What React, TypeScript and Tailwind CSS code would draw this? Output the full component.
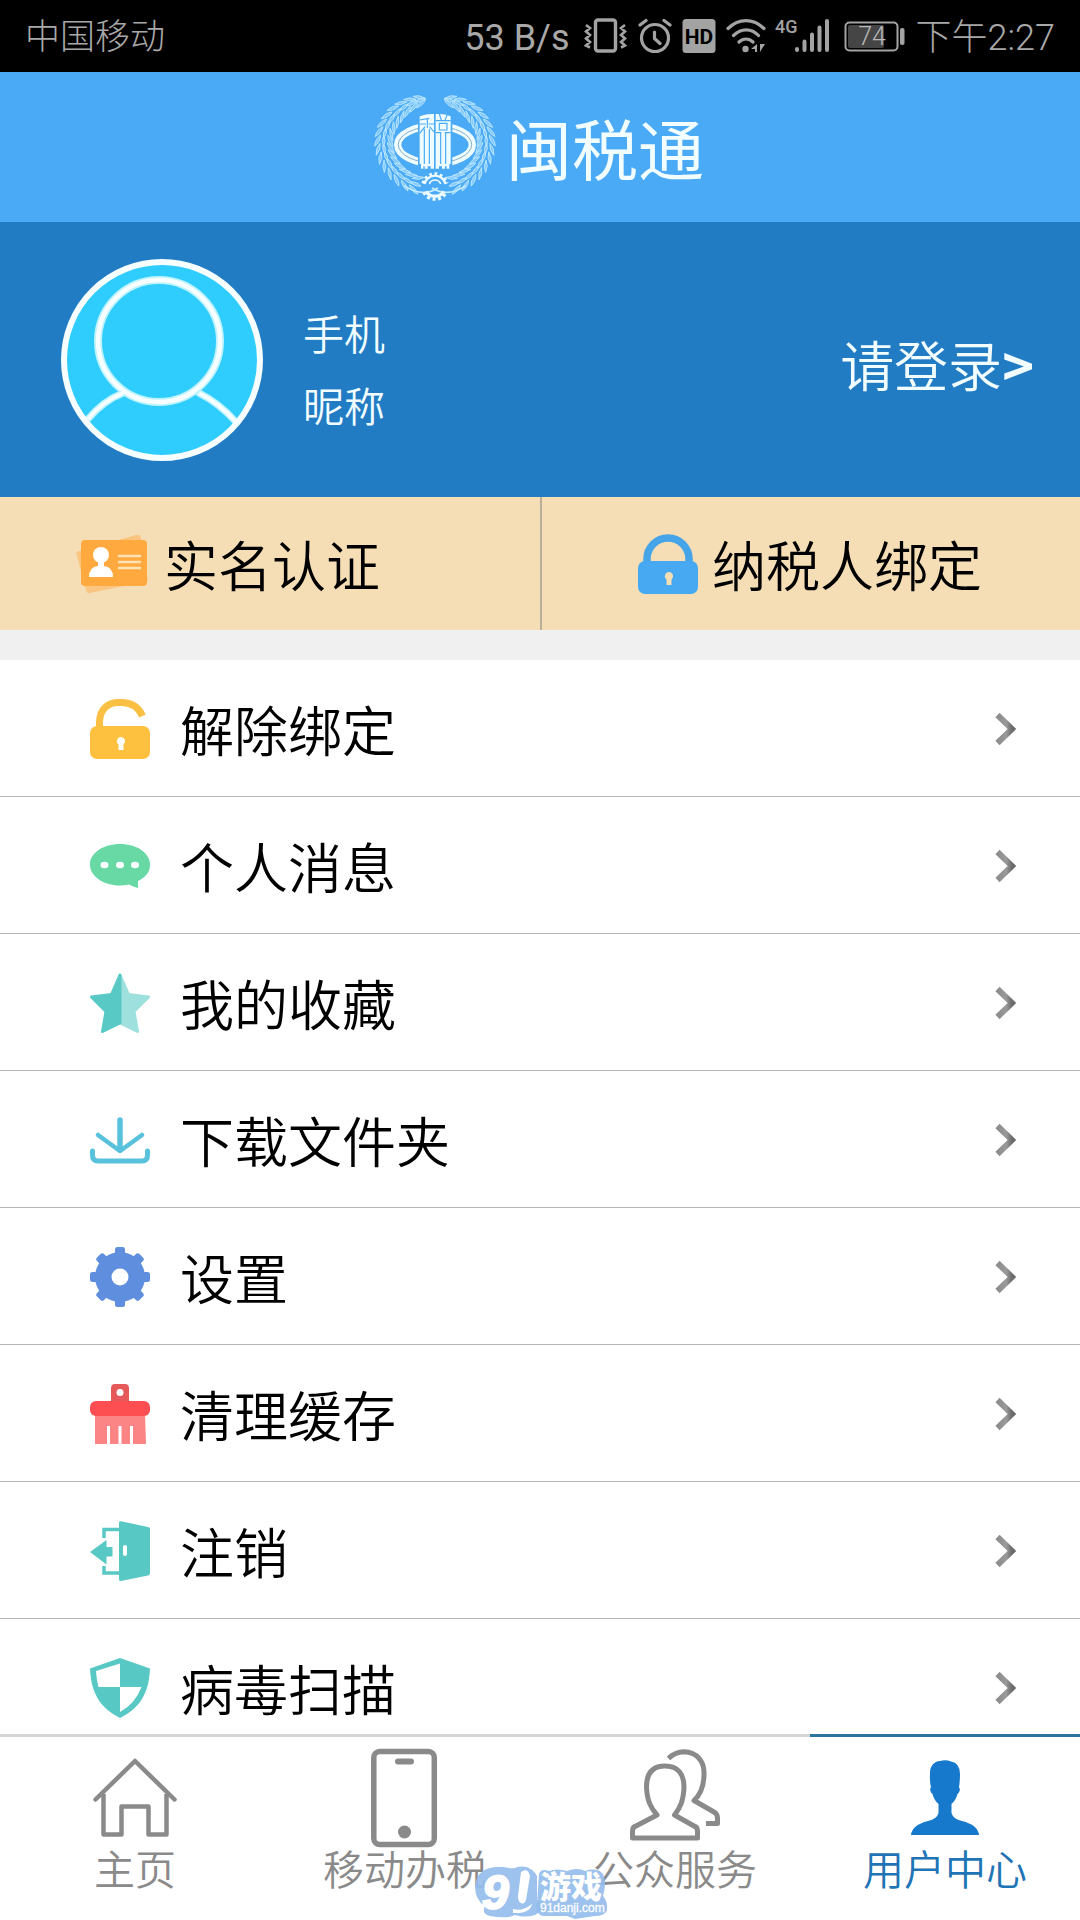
import React from 'react';

/* ---------- status bar drawings ---------- */

const VibrateIcon = () => (
  <svg width="44" height="36" viewBox="0 0 44 36" fill="none" stroke="#a3a3a3" aria-hidden="true">
    <rect x="11.5" y="2" width="20" height="31" rx="2.5" strokeWidth="3.4" />
    <path d="M2 7l4 3-4 3.500 4 3.500-4 3.500 4 3.500-4 3.500 4 2M41 7l-4 3 4 3.500-4 3.500 4 3.500-4 3.500 4 3.500-4 2" strokeWidth="2.6" />
  </svg>
);

const AlarmIcon = () => (
  <svg width="34" height="36" viewBox="0 0 34 36" fill="none" stroke="#a3a3a3" strokeWidth="3.2" strokeLinecap="round" aria-hidden="true">
    <circle cx="17" cy="20" r="13.500" />
    <path d="M2 7l6-4.500M32 7l-6-4.500M16.500 14v6.500l5.500 5" />
  </svg>
);

const HdIcon = () => (
  <svg width="34" height="36" viewBox="0 0 34 36" aria-label="HD">
    <rect x="0.500" y="1" width="33" height="34" rx="3.500" fill="#a3a3a3" />
    <text x="17" y="25.500" textAnchor="middle" fontFamily="Roboto, sans-serif" fontWeight="700" fontSize="21" fill="#000">HD</text>
  </svg>
);

const WifiIcon = () => (
  <svg width="40" height="36" viewBox="0 0 40 36" fill="none" stroke="#a3a3a3" strokeWidth="3.2" strokeLinecap="round" aria-hidden="true">
    <path d="M2 10.500C13 0 27 0 38 10.500M7.500 17.500C15 10 25.500 10 32.500 17.500M13 24C17 20 23 20 27 24" />
    <circle cx="19.500" cy="31" r="3.200" fill="#a3a3a3" stroke="none" />
    <path d="M31 26v8h-2v-3h-4zM34 34v-8h5l-3.500 5.500z" fill="#a3a3a3" stroke="none" />
  </svg>
);

const SignalIcon = () => (
  <svg width="54" height="36" viewBox="0 0 54 36" aria-label="4G" className="overflow-visible">
    <text x="-1" y="15" fontFamily="Roboto, sans-serif" fontWeight="500" fontSize="18" fill="#a3a3a3">4G</text>
    <g stroke="#a3a3a3" strokeWidth="4" strokeLinecap="round">
      <path d="M21 31v1M28.500 23.500v8.500M36 16.500v15.500M43.500 9.500v22.500M51 3v29" />
    </g>
  </svg>
);

const BatteryIcon = () => (
  <svg width="62" height="36" viewBox="0 0 62 36" aria-label="74%">
    <rect x="1.500" y="4.500" width="52" height="28" rx="4" fill="none" stroke="#a3a3a3" strokeWidth="2" />
    <rect x="4" y="7" width="36" height="23" rx="2" fill="#454545" />
    <rect x="56" y="10" width="4.500" height="17" rx="2" fill="#a3a3a3" />
    <text x="28" y="27" textAnchor="middle" fontFamily="Roboto, sans-serif" fontSize="25" fill="#b8b8b8">74</text>
  </svg>
);

/* ---------- emblem ---------- */

type Leaf = { x: number; y: number; a: number; l: number };

const leaves: Leaf[] = [];
for (let i = 0; i < 15; i++) {
  const t = i / 14;
  const deg = 112 + t * 141;
  const rad = (deg * Math.PI) / 180;
  const taper = t > 0.8 ? 1 - (t - 0.8) * 2.4 : 1;
  [-18, 2, 20].forEach((off, k) => {
    const rx = 152 + off * taper;
    const ry = 132 + off * taper;
    const x = 213 + rx * Math.cos(rad);
    const y = 176 + ry * Math.sin(rad);
    leaves.push({ x, y, a: deg + 90 + (k - 1) * 26, l: k === 1 ? 17 : 19 });
  });
}

const WreathHalf = () => (
  <g fill="#84c9fb" stroke="#c6ecfe" strokeWidth="2.2">
    {leaves.map((leaf, i) => (
      <path
        key={i}
        d={`M${-leaf.l} 0Q0 -9 ${leaf.l} 0Q0 9 ${-leaf.l} 0Z`}
        transform={`translate(${leaf.x.toFixed(1)} ${leaf.y.toFixed(1)}) rotate(${leaf.a.toFixed(1)})`}
      />
    ))}
    <path d="M120 305C150 325 185 335 222 312" fill="none" strokeWidth="5" />
  </g>
);

const Emblem = () => (
  <svg width="140" height="120" viewBox="0 0 420 360" aria-hidden="true">
    <WreathHalf />
    <g transform="matrix(-1 0 0 1 426 0)">
      <WreathHalf />
    </g>
    <ellipse cx="213" cy="182" rx="112" ry="56" fill="none" stroke="#effcff" strokeWidth="22" />
    <ellipse cx="213" cy="182" rx="110" ry="55" fill="none" stroke="#86aebd" strokeWidth="3" />
    <path d="M162 94Q190 82 213 86 240 82 265 94V258H162z" fill="#4aaaf6" />
    <path d="M167 97Q190 88 210 90V240H167zM215 90Q240 88 260 97V240H215z" fill="#effcff" />
    <g fill="none" stroke="#4aaaf6">
      <path d="M167 108L196 103M190 106V132M167 120H186M194 120H210M181 134V240M196 134V240M183 128L167 148M197 128L210 144" strokeWidth="3.500" />
      <path d="M226 90L232 108M250 92L243 108M215 110H260M226 118H249V138H226zM215 146H232M242 146H260M230 146V240M245 146V240" strokeWidth="3.500" />
    </g>
    <path d="M171 240H210V254H200V247H191V254H182V247H178V254H171zM215 240H256V254H248V247H243V254H234V247H225V254H215z" fill="#effcff" />
    <g fill="none" stroke="#effcff">
      <path d="M181 300A33 33 0 0 1 245 300" strokeWidth="7" />
      <path d="M177 298A37 37 0 0 1 249 298" strokeWidth="9" strokeDasharray="8 8" />
      <path d="M196 300A18 18 0 0 1 230 300" strokeWidth="5" />
      <path d="M186 322A32 32 0 0 0 240 322" strokeWidth="10" />
      <path d="M179 325A38 38 0 0 0 247 325" strokeWidth="9" strokeDasharray="9 8" />
    </g>
  </svg>
);

/* ---------- profile ---------- */

const Avatar = () => (
  <svg width="202" height="202" viewBox="0 0 202 202" className="shrink-0" aria-hidden="true">
    <circle cx="101" cy="101" r="98" fill="#2fcdfe" />
    <g fill="none" stroke="#bdf3ff" strokeLinecap="round">
      <circle cx="98" cy="82" r="61" strokeWidth="8" />
      <path d="M62 134Q42 142 27 160M138 134Q158 144 175 163" strokeWidth="7" />
    </g>
    <g fill="none" stroke="#f6feff">
      <circle cx="98" cy="82" r="61" strokeWidth="4.500" />
      <path d="M62 134Q42 142 27 160M138 134Q158 144 175 163" strokeWidth="4" />
      <circle cx="101" cy="101" r="98" strokeWidth="6" />
    </g>
  </svg>
);

const IdCardIcon = () => (
  <svg width="74" height="62" viewBox="0 0 74 62" className="shrink-0" aria-hidden="true">
    <path d="M0 19L60 2q4-1 5 3l7 43L14 60q-3 1-4-3z" fill="#f9c580" />
    <rect x="5" y="7" width="66" height="46" rx="4" fill="#ffa93e" />
    <circle cx="25" cy="22" r="8" fill="#fff" />
    <path d="M22 27h6v6q9 1 9 11H13q0-10 9-11z" fill="#fff" />
    <path d="M43 23h21M43 29h21M43 35h21" stroke="#fde3b5" strokeWidth="2.500" strokeLinecap="round" />
  </svg>
);

const Keyhole = ({ fill }: { fill: string }) => (
  <path d="M31 38a4.200 4.200 0 0 1 2.500 7.500V51h-5v-5.500A4.200 4.200 0 0 1 31 38z" fill={fill} />
);

const LockIcon = () => (
  <svg width="60" height="60" viewBox="0 0 60 60" className="shrink-0" aria-hidden="true">
    <path d="M9 31V25a21 21 0 0 1 42 0V31" fill="none" stroke="#46a5e8" strokeWidth="7.500" />
    <rect x="0" y="27" width="60" height="33" rx="7" fill="#46a9f2" />
    <Keyhole fill="#f5deb3" />
  </svg>
);

/* ---------- menu icons, all on a 60 x 60 grid ---------- */

const UnlockIcon = () => (
  <>
    <path d="M9.500 30V23C10 9 19 3 30 3.500 43 3 49 9 52.500 17" fill="none" stroke="#fac043" strokeWidth="7" />
    <rect x="0" y="27" width="60" height="33" rx="7" fill="#fdc03f" />
    <Keyhole fill="#fff" />
  </>
);

const ChatIcon = () => (
  <>
    <path d="M30 8C47 8 60 17 60 28.500 60 36 56 41 48 45V52Q44 51 39 48.500 35 49.500 30 49.500C13 49.500 0 40 0 28.500S13 8 30 8z" fill="#68d9a4" />
    <g fill="#fff">
      <ellipse cx="14.500" cy="29" rx="4" ry="3.300" />
      <ellipse cx="30" cy="29" rx="4" ry="3.300" />
      <ellipse cx="45" cy="29" rx="4" ry="3.300" />
    </g>
  </>
);

const StarIcon = () => (
  <>
    <path d="M30 2L38.500 21.500 58.500 24 44 38.500 47.500 58.500 30 50z" fill="#9ee0dd" stroke="#9ee0dd" strokeWidth="3" strokeLinejoin="round" />
    <path d="M30 2L21.500 21.500 1.500 24 16 38.500 12.500 58.500 30 50z" fill="#58c9c5" stroke="#58c9c5" strokeWidth="3" strokeLinejoin="round" />
  </>
);

const DownloadIcon = () => (
  <g fill="none" stroke="#58c1db" strokeLinecap="round" strokeLinejoin="round">
    <path d="M30 10V40" strokeWidth="5.500" />
    <path d="M8 25L30 41 52 25" strokeWidth="4.500" />
    <path d="M2.500 41V45Q2.500 51 8 51H52Q57.500 51 57.500 45V41" strokeWidth="5" />
  </g>
);

const GearIcon = () => (
  <>
    <g fill="#5e8edd">
      <circle cx="30" cy="30" r="25" />
      {[0, 45, 90, 135].map((a) => (
        <rect key={a} x="25" y="0" width="10" height="60" rx="2.500" transform={`rotate(${a} 30 30)`} />
      ))}
    </g>
    <circle cx="30" cy="30" r="8.500" fill="#fff" />
  </>
);

const BrushIcon = () => (
  <>
    <rect x="21" y="0" width="18" height="24" rx="4" fill="#e6595b" />
    <circle cx="30" cy="8.500" r="3.500" fill="#fff" />
    <path d="M5 28H55L56 60H43V42H40V60H31.500V42H28.500V60H20V42H17V60H5z" fill="#fb8585" />
    <rect x="0" y="17" width="60" height="15" rx="6" fill="#fd4f52" />
  </>
);

const LogoutIcon = () => (
  <>
    <path d="M30 8.500H14V17M14 45V52H30" fill="none" stroke="#58c8c4" strokeWidth="3.500" />
    <path d="M29 1.500Q29 0 31 .300L58 6Q60 6.500 60 8V52Q60 54 58 54.500L31 60Q29 60 29 58.500z" fill="#58c8c4" />
    <rect x="33" y="24" width="4" height="11" rx="2" fill="#fff" />
    <path d="M0 31L16.500 19V26H22.500V35.500H16.500V43.500z" fill="#58c8c4" />
  </>
);

const ShieldIcon = () => (
  <>
    <path d="M30 0L60 10.500C59 35 50 50 30 60 10 50 1 35 0 10.500z" fill="#58c8c4" />
    <path d="M30 5.500V29H8.500Q6.500 22 6 13zM30 29H51.500Q45 46 30 54z" fill="#fff" />
  </>
);

const menu: { label: string; Icon: () => React.ReactElement }[] = [
  { label: '解除绑定', Icon: UnlockIcon },
  { label: '个人消息', Icon: ChatIcon },
  { label: '我的收藏', Icon: StarIcon },
  { label: '下载文件夹', Icon: DownloadIcon },
  { label: '设置', Icon: GearIcon },
  { label: '清理缓存', Icon: BrushIcon },
  { label: '注销', Icon: LogoutIcon },
  { label: '病毒扫描', Icon: ShieldIcon },
];

const Chevron = () => (
  <svg width="22" height="34" viewBox="0 0 22 34" fill="none" className="shrink-0" aria-hidden="true">
    <defs>
      <linearGradient id="chevron" x1="0" y1="0" x2="1" y2="0">
        <stop offset="0" stopColor="#8c8c8c" />
        <stop offset="0.600" stopColor="#9a9a9a" />
        <stop offset="1" stopColor="#6a6a6a" />
      </linearGradient>
    </defs>
    <path d="M3.500 3L18 17 3.500 31" stroke="url(#chevron)" strokeWidth="6" />
  </svg>
);

/* ---------- tab bar ---------- */

const HomeIcon = () => (
  <svg width="84" height="80" viewBox="0 0 84 80" fill="none" stroke="#8a8a8a" strokeWidth="4.500" strokeLinecap="round" strokeLinejoin="round" aria-hidden="true">
    <path d="M2.500 41.500L42 3 81.500 41.500" />
    <path d="M10.500 36V76.500H28.500V48.500H55.500V76.500H73.500V36" strokeLinecap="butt" />
  </svg>
);

const PhoneIcon = () => (
  <svg width="68" height="100" viewBox="0 0 68 100" fill="none" stroke="#8a8a8a" aria-hidden="true">
    <rect x="2.800" y="3.500" width="60.500" height="93" rx="6" strokeWidth="5.500" />
    <path d="M27 13.500H40" strokeWidth="6" strokeLinecap="round" />
    <circle cx="33.500" cy="84" r="6.500" fill="#8a8a8a" stroke="none" />
  </svg>
);

const PeopleIcon = () => (
  <svg width="90" height="98" viewBox="0 0 90 98" fill="none" stroke="#8a8a8a" strokeWidth="5" strokeLinejoin="round" aria-hidden="true">
    <path d="M35 17C22 17 16.500 25 16.500 38 17 52 21 59 27 66L6 77Q2.500 78 2.500 82V89H67.500V82Q67.500 78 64 77L44.500 66C50 59 53.500 52 54 38 54 25 48 17 35 17z" />
    <path d="M38.500 9.500Q45 3 54 2.800C67 3 74.500 13 74 25 74 38 70 46 64 51.500L84 63Q87.500 65 87.500 69V74.500H76" />
  </svg>
);

const UserIcon = () => (
  <svg width="70" height="76" viewBox="0 0 70 76" fill="#1679cb" aria-hidden="true">
    <path d="M30 1Q36 -0.500 41 1.500 50 3 50 14 50 21 49 27.500C51 29 49 33 47.500 34Q46 40 41.500 44V53Q43 59 52 61 68 65 69 75H1Q2 65 18 61 27 59 28.500 53V44Q24 40 22.500 34C21 33 19 29 21 27.500Q19.500 22 20 13C20 6 24 1.500 30 1z" />
  </svg>
);

const tabs = [
  { label: '主页', Icon: HomeIcon, active: false },
  { label: '移动办税', Icon: PhoneIcon, active: false },
  { label: '公众服务', Icon: PeopleIcon, active: false },
  { label: '用户中心', Icon: UserIcon, active: true },
];

const Watermark = () => (
  <svg width="134" height="54" viewBox="0 0 134 54" className="pointer-events-none absolute bottom-0 left-[44%] overflow-visible" aria-hidden="true">
    <g fill="#94bdeb" fillOpacity="0.920">
      <path d="M0 20C1 6 12 0 26 1 34 1 38 4 42 1 50-1 58 2 62 10V34Q70 44 60 49 50 52 40 49 32 53 15 50 6 48 10 40 0 34 0 20z" />
      <path d="M64 8Q66 2 74 5 82 2 92 5 102 1 110 5 122 1 128 8 132 16 128 30 133 36 132 44 130 50 120 50L100 53 92 50H68Q60 48 62 38z" />
    </g>
    <text x="7" y="43" fontFamily="'Liberation Sans', sans-serif" fontWeight="700" fontStyle="italic" fontSize="48" fill="#fff" stroke="#fff" strokeWidth="2">9</text>
    <path d="M46 6Q53 1 55 10L51 34Q49 39 46 37 43 36 43 30z" fill="#fff" />
    <path d="M38 43Q47 46 57 38 55 48 38 47z" fill="#fff" />
    <text x="65" y="32" fontFamily="'Noto Sans CJK SC', sans-serif" fontWeight="900" fontSize="31" fill="#fff">游戏</text>
    <text x="65" y="46" fontFamily="'Liberation Sans', sans-serif" fontSize="12" fill="#fff" stroke="#fff" strokeWidth="0.300">91danji.com</text>
  </svg>
);

export default function App() {
  return (
    <div className="flex h-screen flex-col overflow-hidden bg-white font-['Noto_Sans_CJK_SC',sans-serif] text-black">
      <div className="flex h-[72px] shrink-0 items-center justify-between bg-black px-[25px] font-[Roboto,'Noto_Sans_CJK_SC',sans-serif] text-[36px] leading-[40px] font-light text-[#a8a8a8]">
        <span className="pt-1 text-[35px]">中国移动</span>
        <div className="flex items-center gap-[10px]">
          <span className="pt-1 pr-1 font-normal">53 B/s</span>
          <VibrateIcon />
          <AlarmIcon />
          <HdIcon />
          <WifiIcon />
          <SignalIcon />
          <div className="flex pl-1">
            <BatteryIcon />
          </div>
          <span className="pt-1">下午2:27</span>
        </div>
      </div>

      <header className="flex h-[150px] shrink-0 items-center justify-center gap-[2px] bg-[#4aaaf6] pr-3 pb-[6px]">
        <Emblem />
        <h1 className="pt-1 text-[66px] leading-[72px] font-normal text-[#f2fdff]">闽税通</h1>
      </header>

      <section className="flex h-[275px] shrink-0 items-center bg-[#217cc4] pr-[46px] pl-[61px] text-[#f2fdff]">
        <Avatar />
        <div className="flex flex-col pt-4 pl-10 text-[41px] leading-[72px] font-[350]">
          <span>手机</span>
          <span>昵称</span>
        </div>
        <a href="#login" className="ml-auto flex items-center pt-2 text-[54px] leading-[60px] font-[350]">
          请登录<span className="font-bold">&gt;</span>
        </a>
      </section>

      <div className="grid h-[133px] shrink-0 grid-cols-2 bg-[#f5deb5] text-[54px] leading-[60px] font-[350]">
        <button type="button" className="flex items-center gap-[14px] pl-[76px]">
          <IdCardIcon />
          实名认证
        </button>
        <button type="button" className="flex items-center gap-[14px] border-l-2 border-[#b9b09c] pl-[96px]">
          <LockIcon />
          纳税人绑定
        </button>
      </div>

      <main className="min-h-0 flex-1 overflow-y-auto border-t-[30px] border-[#f0f0f0] [scrollbar-width:none]">
        <ul>
          {menu.map(({ label, Icon }) => (
            <li key={label} className="border-b border-[#b5b5b5]">
              <button type="button" className="flex h-[136px] w-full items-center gap-[30px] pt-[2px] pr-16 pl-[90px] text-[54px] leading-[60px] font-[350]">
                <svg width="60" height="60" viewBox="0 0 60 60" className="shrink-0" aria-hidden="true">
                  <Icon />
                </svg>
                <span className="flex-1 text-left">{label}</span>
                <Chevron />
              </button>
            </li>
          ))}
        </ul>
      </main>

      <nav className="relative grid shrink-0 grid-cols-4 bg-white">
        {tabs.map(({ label, Icon, active }) => (
          <a
            key={label}
            href={`#${label}`}
            aria-current={active ? 'page' : undefined}
            className={
              active
                ? 'flex flex-col items-center border-t-[3px] border-[#2a749e] pt-[11px] pb-[34px] text-[#1f74b5]'
                : 'flex flex-col items-center border-t-[3px] border-[#d4d4d4] pt-[11px] pb-[34px] text-[#8a8a8a]'
            }
          >
            <span className="flex h-[100px] items-center">
              <Icon />
            </span>
            <span className="text-[41px] leading-[38px] font-[350]">{label}</span>
          </a>
        ))}
        <Watermark />
      </nav>
    </div>
  );
}
